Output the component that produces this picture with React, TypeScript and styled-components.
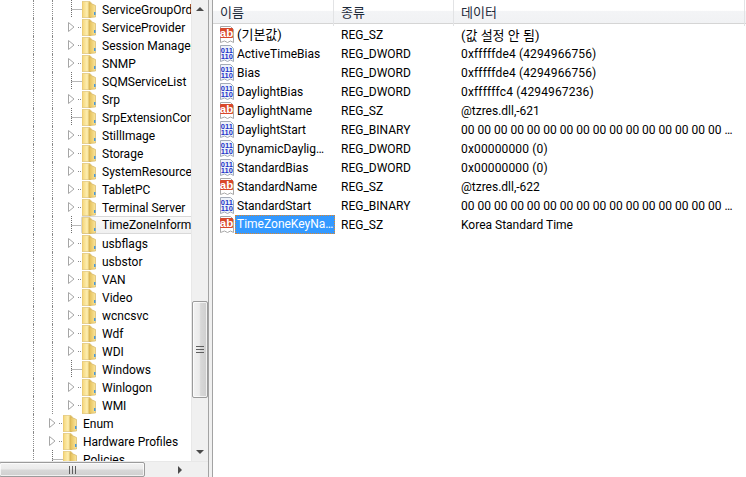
import React from "react";
import styled, { createGlobalStyle } from "styled-components";

const Global = createGlobalStyle`
  html, body { margin: 0; padding: 0; background: #fff; }
  #root { width: 746px; height: 477px; overflow: hidden; }
`;

const FONT = `Roboto, "Noto Sans CJK KR", sans-serif`;

const Window = styled.div`
  width: 746px;
  height: 477px;
  display: flex;
  background: #fff;
  font-family: ${FONT};
  font-size: 12px;
  color: #000;
  overflow: hidden;
`;

const LeftPane = styled.div`
  width: 208px;
  flex: none;
  display: flex;
  flex-direction: column;
`;

const TreeArea = styled.div`
  height: 461px;
  display: flex;
`;

const TreeView = styled.div`
  width: 191px;
  overflow: hidden;
`;

const TreeRow = styled.div`
  height: 18px;
  width: 300px;
  display: flex;
  align-items: center;
  padding-left: 33px;
  box-sizing: border-box;
  white-space: nowrap;
`;

const Guide = styled.div`
  width: 19px;
  height: 18px;
  flex: none;
  box-sizing: border-box;
  border-left: 1px dotted #8a8a8a;
`;

const Connector = styled.svg`
  width: 14px;
  height: 18px;
  flex: none;
  margin-left: -3px;
`;

const FolderSvg = styled.svg`
  width: 14px;
  height: 18px;
  flex: none;
`;

const TreeLabel = styled.span<{ $hot?: boolean }>`
  display: block;
  height: 18px;
  line-height: 20px;
  box-sizing: border-box;
  margin-left: ${(p) => (p.$hot ? "-15px" : "6px")};
  padding-left: ${(p) => (p.$hot ? "20px" : "0")};
  flex: ${(p) => (p.$hot ? "1" : "none")};
  ${(p) =>
    p.$hot
      ? `background: linear-gradient(#fafafa, #f0f0f0); border: 1px solid #d9d9d9; border-radius: 2px; line-height: 17px;`
      : ""}
`;

const FolderWrap = styled.div`
  position: relative;
  z-index: 1;
  display: flex;
  flex: none;
`;

const VScroll = styled.div`
  width: 17px;
  flex: none;
  display: flex;
  flex-direction: column;
  align-items: stretch;
  background: #f0f0f0;
  border-left: 1px solid #e8e8e8;
  box-sizing: border-box;
`;

const ArrowCell = styled.div`
  height: 18px;
  flex: none;
  display: flex;
  align-items: center;
  justify-content: center;
`;

const VSpacer = styled.div<{ $h: number }>`
  height: ${(p) => p.$h}px;
  flex: none;
`;

const VThumb = styled.div`
  height: 97px;
  flex: none;
  box-sizing: border-box;
  border: 1px solid #9b9b9b;
  border-radius: 2px;
  background: linear-gradient(90deg, #f2f2f2 0%, #ebebeb 45%, #d8d8d8 55%, #cfcfcf 100%);
  box-shadow: inset 0 0 0 1px rgba(255, 255, 255, 0.7);
  display: flex;
  align-items: center;
  justify-content: center;
`;

const HScroll = styled.div`
  height: 16px;
  display: flex;
  background: #f0f0f0;
  border-top: 1px solid #e8e8e8;
`;

const HThumb = styled.div`
  width: 146px;
  margin-left: -1px;
  flex: none;
  box-sizing: border-box;
  border: 1px solid #9b9b9b;
  border-radius: 2px;
  background: linear-gradient(#f2f2f2 0%, #ebebeb 45%, #d8d8d8 55%, #cfcfcf 100%);
  box-shadow: inset 0 0 0 1px rgba(255, 255, 255, 0.7);
  display: flex;
  align-items: center;
  justify-content: center;
`;

const HTrack = styled.div`
  flex: 1;
  display: flex;
  align-items: center;
  justify-content: flex-end;
  padding-right: 7px;
`;

const Corner = styled.div`
  width: 17px;
  flex: none;
  background: #f0f0f0;
`;

const Splitter = styled.div`
  width: 5px;
  flex: none;
  box-sizing: border-box;
  background: #f0f0f0;
  border-left: 1px solid #a3a3a3;
  border-right: 1px solid #a3a3a3;
`;

const RightPane = styled.div`
  flex: 1;
  min-width: 0;
  display: flex;
  flex-direction: column;
`;

const Header = styled.div`
  height: 24px;
  flex: none;
  box-sizing: border-box;
  display: grid;
  grid-template-columns: 121px 120px 291px;
  background: linear-gradient(#fff 0%, #fff 45%, #f3f4f6 50%, #f1f2f4 100%);
  border-bottom: 1px solid #d5d5d5;
`;

const HeaderCell = styled.div<{ $pad: number }>`
  box-sizing: border-box;
  padding-left: ${(p) => p.$pad}px;
  border-right: 1px solid #e2e3e5;
  font-size: 13px;
  line-height: 26px;
  color: #1d2a3a;
`;

const ListBody = styled.div`
  padding-top: 1px;
`;

const ListRow = styled.div`
  height: 19px;
  display: grid;
  grid-template-columns: 121px 120px 291px;
  align-items: center;
`;

const NameCell = styled.div`
  display: flex;
  align-items: center;
  padding-left: 6px;
  min-width: 0;
  box-sizing: border-box;
`;

const IconSvg = styled.svg`
  width: 16px;
  height: 18px;
  flex: none;
  margin-right: 2px;
`;

const NameText = styled.span<{ $selected?: boolean; $ko?: boolean }>`
  display: block;
  flex: 1;
  min-width: 0;
  overflow: hidden;
  white-space: nowrap;
  text-overflow: ellipsis;
  line-height: 18px;
  padding-right: 6px;
  ${(p) => (p.$ko ? "font-size: 13px;" : "")}
  ${(p) =>
    p.$selected
      ? `margin-left: -2px; margin-right: -1px; padding: 0 0 0 2px; height: 19px; box-sizing: border-box; background: #3399ff; color: #fff; outline: 1px dotted #e0862a; outline-offset: -1px; line-height: 19px;`
      : ""}
`;

const TypeCell = styled.div`
  padding-left: 7px;
  white-space: nowrap;
  min-width: 0;
`;

const DataCell = styled.div<{ $ko?: boolean; $dword?: boolean }>`
  padding: 0 10px 0 7px;
  white-space: nowrap;
  overflow: hidden;
  text-overflow: ellipsis;
  ${(p) => (p.$ko ? "font-size: 13px;" : "")}
  ${(p) => (p.$dword ? "letter-spacing: 0.15px;" : "")}
`;

const treeItems: { name: string; expand: boolean; depth: number; hot?: boolean }[] = [
  { name: "ServiceGroupOrder", expand: false, depth: 3 },
  { name: "ServiceProvider", expand: true, depth: 3 },
  { name: "Session Manager", expand: true, depth: 3 },
  { name: "SNMP", expand: true, depth: 3 },
  { name: "SQMServiceList", expand: false, depth: 3 },
  { name: "Srp", expand: true, depth: 3 },
  { name: "SrpExtensionConfig", expand: false, depth: 3 },
  { name: "StillImage", expand: true, depth: 3 },
  { name: "Storage", expand: true, depth: 3 },
  { name: "SystemResources", expand: true, depth: 3 },
  { name: "TabletPC", expand: true, depth: 3 },
  { name: "Terminal Server", expand: true, depth: 3 },
  { name: "TimeZoneInformation", expand: false, depth: 3, hot: true },
  { name: "usbflags", expand: true, depth: 3 },
  { name: "usbstor", expand: true, depth: 3 },
  { name: "VAN", expand: true, depth: 3 },
  { name: "Video", expand: true, depth: 3 },
  { name: "wcncsvc", expand: true, depth: 3 },
  { name: "Wdf", expand: true, depth: 3 },
  { name: "WDI", expand: true, depth: 3 },
  { name: "Windows", expand: false, depth: 3 },
  { name: "Winlogon", expand: true, depth: 3 },
  { name: "WMI", expand: true, depth: 3 },
  { name: "Enum", expand: true, depth: 2 },
  { name: "Hardware Profiles", expand: true, depth: 2 },
  { name: "Policies", expand: false, depth: 2 },
];

const HEX =
  "00 00 00 00 00 00 00 00 00 00 00 00 00 00 00 00 00 00 00 00 00 00 00 00 00 00 00 00";

const values: { name: string; type: string; data: string; kind: "sz" | "bin"; selected?: boolean; ko?: boolean }[] = [
  { name: "(기본값)", type: "REG_SZ", data: "(값 설정 안 됨)", kind: "sz", ko: true },
  { name: "ActiveTimeBias", type: "REG_DWORD", data: "0xfffffde4 (4294966756)", kind: "bin" },
  { name: "Bias", type: "REG_DWORD", data: "0xfffffde4 (4294966756)", kind: "bin" },
  { name: "DaylightBias", type: "REG_DWORD", data: "0xffffffc4 (4294967236)", kind: "bin" },
  { name: "DaylightName", type: "REG_SZ", data: "@tzres.dll,-621", kind: "sz" },
  { name: "DaylightStart", type: "REG_BINARY", data: HEX, kind: "bin" },
  { name: "DynamicDaylightTimeDisabled", type: "REG_DWORD", data: "0x00000000 (0)", kind: "bin" },
  { name: "StandardBias", type: "REG_DWORD", data: "0x00000000 (0)", kind: "bin" },
  { name: "StandardName", type: "REG_SZ", data: "@tzres.dll,-622", kind: "sz" },
  { name: "StandardStart", type: "REG_BINARY", data: HEX, kind: "bin" },
  { name: "TimeZoneKeyName", type: "REG_SZ", data: "Korea Standard Time", kind: "sz", selected: true },
];

function Folder() {
  return (
    <FolderSvg viewBox="0 0 14 18">
      <defs>
        <linearGradient id="fb" x1="0" x2="1" y1="0" y2="0">
          <stop offset="0" stopColor="#f4d374" />
          <stop offset="0.55" stopColor="#fdeeb0" />
          <stop offset="1" stopColor="#e6c25c" />
        </linearGradient>
        <linearGradient id="ff" x1="0" x2="1" y1="0" y2="0">
          <stop offset="0" stopColor="#e3bd55" />
          <stop offset="1" stopColor="#fbe69c" />
        </linearGradient>
      </defs>
      <path d="M0 1.5h8l1 1v15H0z" fill="url(#fb)" stroke="#d8ba68" strokeWidth="0.6" />
      <path d="M7 2.5l6.5 3V17L7 17.5z" fill="url(#ff)" stroke="#cfad55" strokeWidth="0.6" />
      <rect x="12" y="12" width="1.5" height="3" fill="#4a98d8" />
    </FolderSvg>
  );
}

function Link({ expand }: { expand: boolean }) {
  return (
    <Connector viewBox="0 0 14 18">
      {expand ? (
        <>
          <path d="M0.5 4.5 L6 9 L0.5 13.5 Z" fill="#fff" stroke="#a6a6a6" />
          <path d="M10 9.5h3" stroke="#8a8a8a" strokeDasharray="1 1" />
        </>
      ) : (
        <path d="M3.5 0V18M3.5 9.5H14" stroke="#707070" strokeDasharray="1 1" fill="none" />
      )}
    </Connector>
  );
}

function AbIcon() {
  return (
    <IconSvg viewBox="0 0 16 18">
      <path d="M1.5 .5h10l3 3v13l-3-1.5-3 1.5-3-1.5-4 1.5z" fill="#fff" stroke="#a9a9a9" />
      <rect x="1" y="2" width="13" height="10" rx="1" fill="#d9482a" />
      <text x="7.5" y="10.6" textAnchor="middle" fontFamily="Liberation Sans, sans-serif" fontWeight="700" fontSize="11.5" fill="#fff">
        ab
      </text>
    </IconSvg>
  );
}

function BinIcon() {
  return (
    <IconSvg viewBox="0 0 16 18">
      <path d="M1.5 .5h10l3 3v13l-3-1.5-3 1.5-3-1.5-4 1.5z" fill="#eef3fb" stroke="#a4abb8" />
      <text x="7.8" y="7.6" textAnchor="middle" fontFamily="Liberation Sans, sans-serif" fontWeight="700" fontSize="7.5" fill="#1f35c8">
        011
      </text>
      <text x="7.8" y="14" textAnchor="middle" fontFamily="Liberation Sans, sans-serif" fontWeight="700" fontSize="7.5" fill="#1f35c8">
        110
      </text>
    </IconSvg>
  );
}

function Arrow({ dir }: { dir: "up" | "down" | "right" }) {
  const d =
    dir === "up" ? "M0 5L4 1L8 5Z" : dir === "down" ? "M0 1H8L4 5Z" : "M2 -1L6 3L2 7Z";
  return (
    <svg width="8" height="6" viewBox="0 0 8 6" style={{ overflow: "visible" }}>
      <path d={d} fill="#4a4a4a" />
    </svg>
  );
}

function GripV() {
  return (
    <svg width="8" height="7" viewBox="0 0 8 7">
      <path d="M0 .5h8M0 3.5h8M0 6.5h8" stroke="#5e5e5e" />
    </svg>
  );
}

function GripH() {
  return (
    <svg width="7" height="8" viewBox="0 0 7 8">
      <path d="M.5 0v8M3.5 0v8M6.5 0v8" stroke="#5e5e5e" />
    </svg>
  );
}

export default function App() {
  return (
    <Window>
      <Global />
      <LeftPane>
        <TreeArea>
          <TreeView>
            {treeItems.map((it) => (
              <TreeRow key={it.name}>
                <Guide />
                {it.depth === 3 ? <Guide /> : null}
                <Link expand={it.expand} />
                <FolderWrap>
                  <Folder />
                </FolderWrap>
                <TreeLabel $hot={it.hot}>{it.name}</TreeLabel>
              </TreeRow>
            ))}
          </TreeView>
          <VScroll>
            <ArrowCell>
              <Arrow dir="up" />
            </ArrowCell>
            <VSpacer $h={283} />
            <VThumb>
              <GripV />
            </VThumb>
            <VSpacer $h={45} />
            <ArrowCell>
              <Arrow dir="down" />
            </ArrowCell>
          </VScroll>
        </TreeArea>
        <HScroll>
          <HThumb>
            <GripH />
          </HThumb>
          <HTrack>
            <Arrow dir="right" />
          </HTrack>
          <Corner />
        </HScroll>
      </LeftPane>
      <Splitter />
      <RightPane>
        <Header>
          <HeaderCell $pad={7}>이름</HeaderCell>
          <HeaderCell $pad={7}>종류</HeaderCell>
          <HeaderCell $pad={7}>데이터</HeaderCell>
        </Header>
        <ListBody>
          {values.map((v) => (
            <ListRow key={v.name}>
              <NameCell>
                {v.kind === "sz" ? <AbIcon /> : <BinIcon />}
                <NameText $selected={v.selected} $ko={v.ko}>{v.name}</NameText>
              </NameCell>
              <TypeCell>{v.type}</TypeCell>
              <DataCell $ko={v.ko} $dword={v.type === "REG_DWORD"}>{v.data}</DataCell>
            </ListRow>
          ))}
        </ListBody>
      </RightPane>
    </Window>
  );
}
